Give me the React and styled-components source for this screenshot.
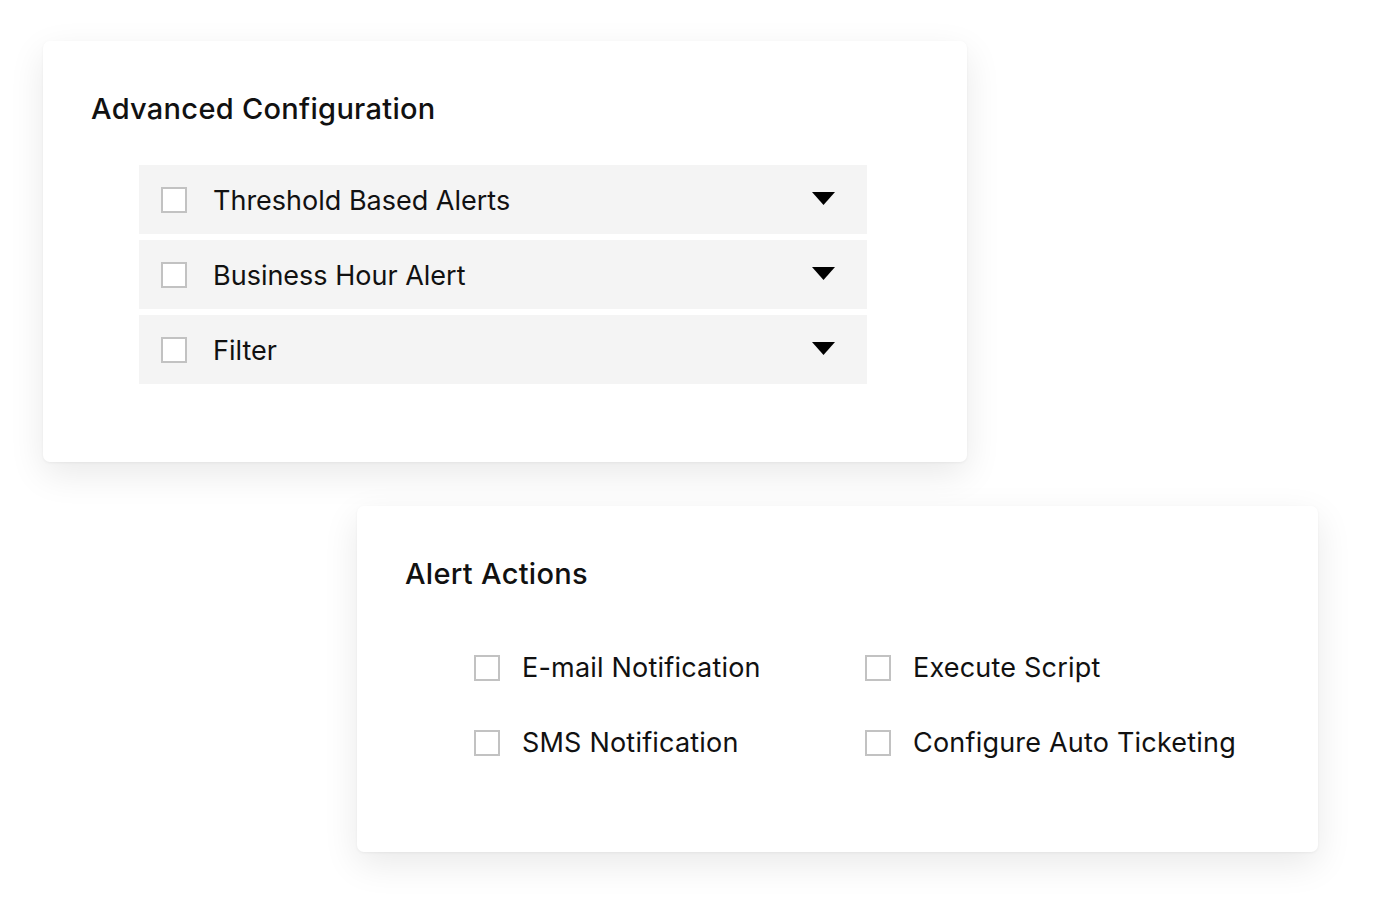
import React from "react";
import styled, { createGlobalStyle } from "styled-components";

const GlobalStyle = createGlobalStyle`
  body {
    margin: 0;
    background: #ffffff;
    font-family: Inter, "Noto Sans", sans-serif;
    color: #111111;
  }
`;

const Page = styled.div`
  width: 1378px;
  height: 914px;
  padding: 41px 0 0 43px;
  box-sizing: border-box;
  display: flex;
  flex-direction: column;
`;

const Card = styled.section`
  background: #ffffff;
  border-radius: 7px;
  box-shadow: 0 12px 36px rgba(0, 0, 0, 0.09), 0 1px 3px rgba(0, 0, 0, 0.05);
  box-sizing: border-box;
  width: ${(p) => p.$width}px;
  height: ${(p) => p.$height}px;
  margin-left: ${(p) => p.$offset || 0}px;
  margin-top: ${(p) => p.$top || 0}px;
  padding: 50px 48px 0;
`;

const Title = styled.h2`
  margin: 0;
  font-size: 29px;
  line-height: 36px;
  font-weight: 500;
  letter-spacing: 0.3px;
  color: #111111;
`;

const RowList = styled.div`
  display: flex;
  flex-direction: column;
  gap: 6px;
  margin: 38px 52px 0 48px;
`;

const Row = styled.div`
  display: flex;
  align-items: center;
  height: 69px;
  padding: 0 32px 0 22px;
  background: #f4f4f4;
`;

const Box = styled.span`
  width: 26px;
  height: 26px;
  box-sizing: border-box;
  border: 2px solid #c2c2c2;
  background: #ffffff;
  flex-shrink: 0;
`;

const Label = styled.span`
  margin-left: 26px;
  margin-top: ${(p) => (p.$nudge ? 3 : 0)}px;
  font-size: 27px;
  line-height: 32px;
  font-weight: 400;
  letter-spacing: ${(p) => (p.$nudge ? 0 : 0.2)}px;
  color: #111111;
  flex: 1;
`;

const Caret = styled.svg`
  width: 23px;
  height: 13px;
  flex-shrink: 0;
  margin-top: -2px;
`;

const ActionGrid = styled.div`
  display: grid;
  grid-template-columns: 391px auto;
  row-gap: 43px;
  margin: 60px 0 0 69px;
`;

const Action = styled.div`
  display: flex;
  align-items: center;
  height: 32px;

  ${Label} {
    margin-left: 22px;
  }
`;

const rows = ["Threshold Based Alerts", "Business Hour Alert", "Filter"];
const actions = [
  "E-mail Notification",
  "Execute Script",
  "SMS Notification",
  "Configure Auto Ticketing",
];

export default function App() {
  return (
    <>
      <GlobalStyle />
      <Page>
        <Card $width={924} $height={421}>
          <Title>Advanced Configuration</Title>
          <RowList>
            {rows.map((r) => (
              <Row key={r}>
                <Box />
                <Label $nudge>{r}</Label>
                <Caret viewBox="0 0 23 13">
                  <path d="M0 0 H23 L11.5 13 Z" fill="#000" />
                </Caret>
              </Row>
            ))}
          </RowList>
        </Card>
        <Card $width={961} $height={346} $offset={314} $top={44}>
          <Title>Alert Actions</Title>
          <ActionGrid>
            {actions.map((a) => (
              <Action key={a}>
                <Box />
                <Label>{a}</Label>
              </Action>
            ))}
          </ActionGrid>
        </Card>
      </Page>
    </>
  );
}
